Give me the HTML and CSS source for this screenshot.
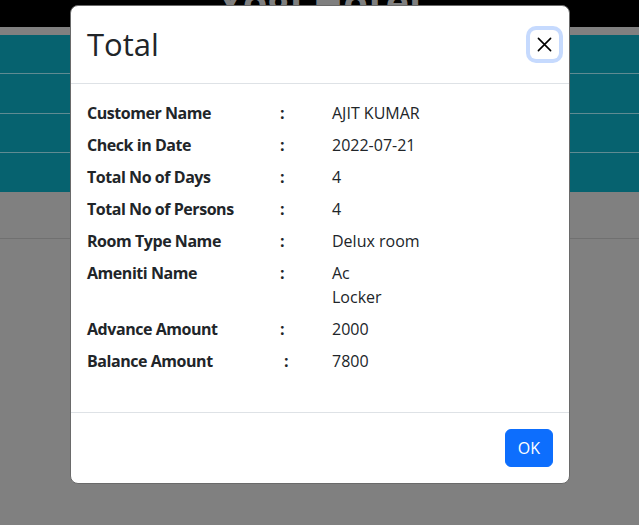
FILE: index.html
```html
<!DOCTYPE html>
<html lang="en">
<head>
<meta charset="utf-8">
<title>Yogi Hotel</title>
<link rel="stylesheet" href="styles.css">
</head>
<body>
<div class="page">
  <header class="site-header"><span class="brand">Yogi Hotel</span></header>
  <div class="strip"></div>
  <nav class="menu">
    <div class="menu-row"></div>
    <div class="menu-row"></div>
    <div class="menu-row"></div>
    <div class="menu-row"></div>
  </nav>
  <div class="sub"></div>
  <div class="rest"></div>
</div>

<div class="modal" role="dialog">
  <div class="modal-header">
    <h1 class="modal-title">Total</h1>
    <button class="btn-close" type="button" aria-label="Close">
      <svg viewBox="0 0 16 16" width="16" height="16"><path d="M1.5 1.5 14.5 14.5M14.5 1.5 1.5 14.5" stroke="#000" stroke-width="1.7" stroke-linecap="round" fill="none"/></svg>
    </button>
  </div>
  <div class="modal-body">
    <div class="info-row"><span class="label">Customer Name</span><span class="colon">:</span><span class="value">AJIT KUMAR</span></div>
    <div class="info-row"><span class="label">Check in Date</span><span class="colon">:</span><span class="value">2022-07-21</span></div>
    <div class="info-row"><span class="label">Total No of Days</span><span class="colon">:</span><span class="value">4</span></div>
    <div class="info-row"><span class="label">Total No of Persons</span><span class="colon">:</span><span class="value">4</span></div>
    <div class="info-row"><span class="label">Room Type Name</span><span class="colon">:</span><span class="value">Delux room</span></div>
    <div class="info-row"><span class="label">Ameniti Name</span><span class="colon">:</span><span class="value">Ac<br>Locker</span></div>
    <div class="info-row"><span class="label">Advance Amount</span><span class="colon">:</span><span class="value">2000</span></div>
    <div class="info-row"><span class="label">Balance Amount</span><span class="colon colon-shift">:</span><span class="value">7800</span></div>
  </div>
  <div class="modal-footer">
    <button class="btn-ok" type="button">OK</button>
  </div>
</div>
</body>
</html>
```
FILE: styles.css
```css
html, body {
  margin: 0;
  padding: 0;
}
body {
  font-family: "Open Sans", "Liberation Sans", sans-serif;
  background: #808080;
  height: 525px;
  overflow: hidden;
  color: #212529;
}
.site-header {
  height: 27px;
  background: #000;
  text-align: center;
  overflow: hidden;
}
.brand {
  display: block;
  font-size: 40px;
  font-weight: 700;
  line-height: 40px;
  color: #7f7f7f;
  margin-top: -18px;
}
.strip {
  height: 8px;
  background: #808080;
}
.menu {
  background: #06626f;
}
.menu-row {
  height: 38px;
  border-bottom: 1px solid #5f8b92;
}
.menu-row:nth-child(even) {
  height: 39px;
}
.menu-row:last-child {
  border-bottom: 0;
}
.sub {
  height: 46px;
  border-bottom: 1px solid #707070;
}
.rest {
  height: 300px;
}

.modal {
  position: absolute;
  left: 70px;
  top: 5px;
  width: 498px;
  background: #fff;
  border: 1px solid #6a6a6a;
  border-radius: 8px;
}
.modal-header {
  box-sizing: border-box;
  height: 78px;
  padding: 16px;
  display: flex;
  align-items: center;
  justify-content: space-between;
  border-bottom: 1px solid #dee2e6;
}
.modal-title {
  margin: 0;
  font-size: 31px;
  font-weight: 500;
  line-height: 1.2;
  color: #212529;
}
.btn-close {
  box-sizing: content-box;
  width: 15px;
  height: 15px;
  padding: 7px;
  margin-right: -6px;
  border: 0;
  border-radius: 6px;
  background: transparent;
  box-shadow: 0 0 0 4px #c6dafe;
  display: flex;
  align-items: center;
  justify-content: center;
  cursor: pointer;
}
.btn-close svg {
  display: block;
  width: 15px;
  height: 15px;
}
.modal-body {
  padding: 17px 16px 31px;
}
.info-row {
  display: grid;
  grid-template-columns: 193px 52px 1fr;
  font-size: 16px;
  line-height: 24px;
  margin-bottom: 8px;
}
.label, .colon {
  font-weight: 700;
}
.label {
  letter-spacing: -0.45px;
}
.colon-shift {
  padding-left: 4px;
}
.value {
  font-weight: 400;
}
.modal-footer {
  border-top: 1px solid #dee2e6;
  padding: 12px;
  display: flex;
  justify-content: flex-end;
}
.btn-ok {
  margin: 4px;
  font-family: inherit;
  font-size: 16px;
  line-height: 24px;
  padding: 6px 12px;
  color: #fff;
  background: #0d6efd;
  border: 1px solid #0d6efd;
  border-radius: 6px;
  cursor: pointer;
}
```
